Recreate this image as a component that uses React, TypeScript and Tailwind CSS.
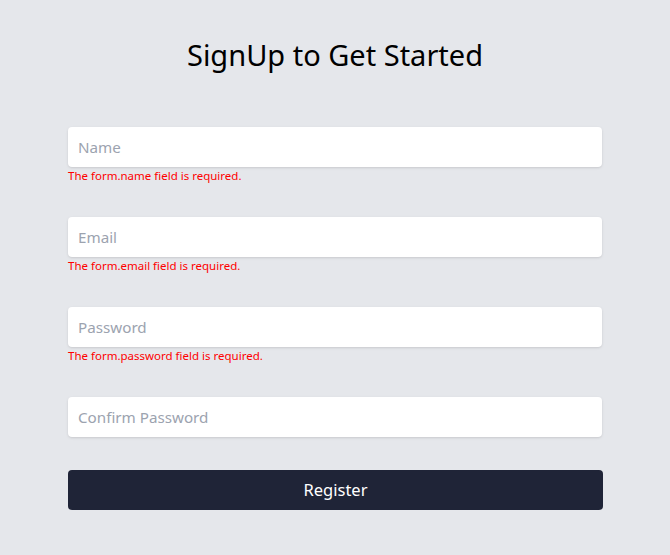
import React from "react";

const fields = [
  { name: "name", placeholder: "Name", type: "text", error: "The form.name field is required." },
  { name: "email", placeholder: "Email", type: "email", error: "The form.email field is required." },
  { name: "password", placeholder: "Password", type: "password", error: "The form.password field is required." },
  { name: "confirm", placeholder: "Confirm Password", type: "password", error: "" },
];

const App = () => {
  return (
    <div
      className="min-h-[555px] w-full bg-[#e5e7eb] pt-[37px]"
      style={{ fontFamily: '"Noto Sans", "Open Sans", sans-serif' }}
    >
      <h1 className="text-center text-[29px] leading-9 text-black">SignUp to Get Started</h1>
      <form className="mx-auto mt-[54px] w-[534px]">
        {fields.map((f) => (
          <div key={f.name} className={f.error ? "mb-[34px]" : "mb-[33px]"}>
            <input
              type={f.type}
              placeholder={f.placeholder}
              className="block h-10 w-full rounded bg-white px-[10px] text-[15.2px] text-gray-700 shadow placeholder:text-[#9ca3af] focus:outline-none"
            />
            {f.error && <p className="h-4 text-[11.5px] leading-[18px] text-[#ff0000]">{f.error}</p>}
          </div>
        ))}
        <button
          type="button"
          className="block h-10 w-[535px] rounded bg-[#1f2437] text-[16.5px] text-white"
        >
          Register
        </button>
      </form>
    </div>
  );
};

export default App;
